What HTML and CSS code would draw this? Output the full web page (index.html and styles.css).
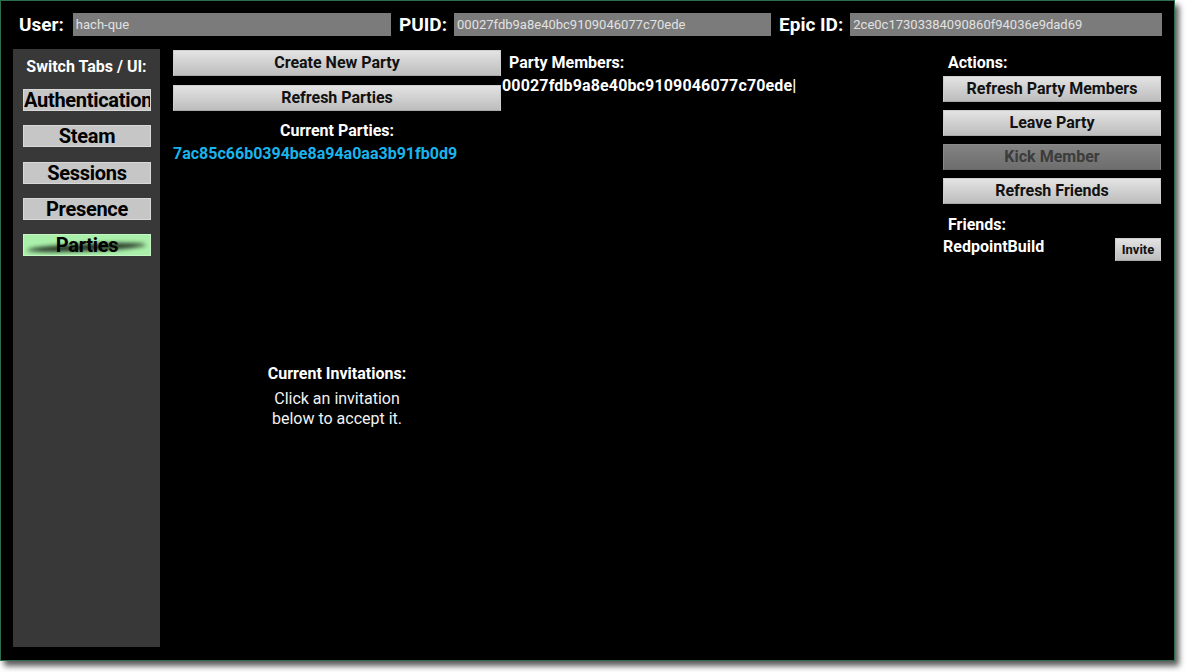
FILE: index.html
```html
<!DOCTYPE html>
<html lang="en">
<head>
<meta charset="utf-8">
<title>Parties</title>
<link rel="stylesheet" href="styles.css">
</head>
<body>
<div class="window">
  <div class="header">
    <div class="field field-user">
      <span class="field-label">User:</span>
      <span class="field-input">hach-que</span>
    </div>
    <div class="field field-puid">
      <span class="field-label">PUID:</span>
      <span class="field-input">00027fdb9a8e40bc9109046077c70ede</span>
    </div>
    <div class="field field-epic">
      <span class="field-label">Epic ID:</span>
      <span class="field-input">2ce0c17303384090860f94036e9dad69</span>
    </div>
  </div>
  <div class="main">
    <div class="sidebar">
      <div class="sidebar-title">Switch Tabs / UI:</div>
      <div class="tabs">
        <div class="tab">Authentication</div>
        <div class="tab">Steam</div>
        <div class="tab">Sessions</div>
        <div class="tab">Presence</div>
        <div class="tab tab-active"><span class="tab-text">Parties</span></div>
      </div>
    </div>
    <div class="col-parties">
      <div class="btn btn-wide">Create New Party</div>
      <div class="btn btn-wide">Refresh Parties</div>
      <div class="heading center">Current Parties:</div>
      <div class="party-id">7ac85c66b0394be8a94a0aa3b91fb0d9</div>
      <div class="invitations">
        <div class="heading center">Current Invitations:</div>
        <div class="note">Click an invitation<br>below to accept it.</div>
      </div>
    </div>
    <div class="col-members">
      <div class="heading members-title">Party Members:</div>
      <div class="member-id">00027fdb9a8e40bc9109046077c70ede|</div>
    </div>
    <div class="col-actions">
      <div class="heading actions-title">Actions:</div>
      <div class="action-list">
        <div class="btn">Refresh Party Members</div>
        <div class="btn">Leave Party</div>
        <div class="btn btn-disabled">Kick Member</div>
        <div class="btn">Refresh Friends</div>
      </div>
      <div class="heading friends-title">Friends:</div>
      <div class="friend-row">
        <span class="friend-name">RedpointBuild</span>
        <span class="btn btn-small">Invite</span>
      </div>
    </div>
  </div>
</div>
</body>
</html>
```

FILE: styles.css
```css
html, body {
  margin: 0;
  padding: 0;
  background: #ffffff;
}

body {
  font-family: Roboto, "Liberation Sans", sans-serif;
  width: 1186px;
  height: 672px;
  overflow: hidden;
}

.window {
  box-sizing: border-box;
  width: 1175px;
  height: 661px;
  background: #000;
  border: 1px solid #2e6c4d;
  box-shadow: 4px 5px 6px rgba(0, 0, 0, 0.65);
  display: flex;
  flex-direction: column;
  color: #fff;
}

/* header */
.header {
  display: flex;
  align-items: center;
  gap: 8px;
  padding: 12px 12px 0 18px;
  height: 23px;
}

.field {
  display: flex;
  align-items: center;
  gap: 9px;
}

.field-user { flex: 0 0 372px; }
.field-puid { flex: 0 0 372px; gap: 7px; }
.field-epic { flex: 1; gap: 7px; }

.field-label {
  font-size: 19px;
  font-weight: 700;
  line-height: 23px;
  color: #fff;
}

.field-input {
  flex: 1;
  height: 23px;
  line-height: 23px;
  background: #7b7b7b;
  color: #e2e2e2;
  font-size: 13px;
  padding-left: 3px;
  white-space: nowrap;
  overflow: hidden;
}

/* main */
.main {
  flex: 1;
  display: flex;
  margin-top: 13px;
  padding: 0 13px 13px 12px;
}

.sidebar {
  width: 147px;
  flex: 0 0 147px;
  background: #383838;
  padding-top: 8px;
  box-sizing: border-box;
}

.sidebar-title {
  text-align: center;
  font-size: 16px;
  font-weight: 700;
  line-height: 19px;
}

.tabs {
  display: flex;
  flex-direction: column;
  gap: 14.3px;
  margin-top: 13px;
  padding: 0 9px 0 10px;
}

.tab {
  height: 22px;
  box-sizing: border-box;
  background: #c6c6c6;
  border: 1px solid #d8d8d8;
  color: #000;
  font-size: 20px;
  font-weight: 700;
  line-height: 20px;
  text-align: center;
  white-space: nowrap;
  letter-spacing: -0.3px;
  overflow: hidden;
}

.tab-active {
  position: relative;
  background: #aaf0aa;
  border-color: #c4f6c4;
}

.tab-active::before {
  content: "";
  position: absolute;
  left: 3px;
  right: 4px;
  top: 9px;
  height: 7px;
  background: #1a261a;
  border-radius: 50%;
  filter: blur(2.2px);
  transform: rotate(-2.5deg);
  opacity: 0.95;
}

.tab-text {
  position: relative;
}

/* buttons */
.btn {
  box-sizing: border-box;
  height: 26px;
  background: linear-gradient(#e3e3e3, #bdbdbd);
  border: 1px solid #cecece;
  border-bottom-color: #a8a8a8;
  color: #111;
  font-size: 16px;
  font-weight: 700;
  line-height: 24px;
  text-align: center;
  white-space: nowrap;
}

.btn-disabled {
  background: linear-gradient(#828282, #6e6e6e);
  border-color: #8a8a8a;
  border-bottom-color: #666;
  color: #3c3c3c;
}

.btn-small {
  display: inline-block;
  width: 46px;
  height: 23px;
  font-size: 13px;
  line-height: 21px;
}

/* parties column */
.col-parties {
  flex: 0 0 328px;
  margin-left: 13px;
  padding-top: 1px;
  display: flex;
  flex-direction: column;
}

.btn-wide + .btn-wide {
  margin-top: 9px;
}

.heading {
  font-size: 16px;
  font-weight: 700;
  line-height: 19px;
  color: #fff;
}

.center { text-align: center; }

.col-parties > .heading {
  margin-top: 10px;
}

.party-id {
  color: #1ab4ec;
  font-size: 16px;
  font-weight: 700;
  line-height: 19px;
  margin-top: 4px;
}

.invitations {
  margin-top: 201px;
}

.note {
  text-align: center;
  font-size: 16px;
  line-height: 20px;
  margin-top: 6px;
  color: #f2f2f2;
}

/* members column */
.col-members {
  flex: 1;
  padding-top: 4px;
  padding-left: 1px;
}

.members-title {
  padding-left: 7px;
}

.member-id {
  font-size: 16px;
  font-weight: 700;
  line-height: 19px;
  margin-top: 4px;
  letter-spacing: 0.15px;
}

/* actions column */
.col-actions {
  flex: 0 0 218px;
  padding-top: 4px;
}

.actions-title {
  padding-left: 5px;
}

.action-list {
  display: flex;
  flex-direction: column;
  gap: 8px;
  margin-top: 4px;
}

.friends-title {
  padding-left: 5px;
  margin-top: 11px;
}

.friend-row {
  display: flex;
  justify-content: space-between;
  align-items: flex-start;
  margin-top: 4px;
}

.friend-name {
  font-size: 16px;
  font-weight: 700;
  line-height: 19px;
  margin-top: -1px;
}
```
